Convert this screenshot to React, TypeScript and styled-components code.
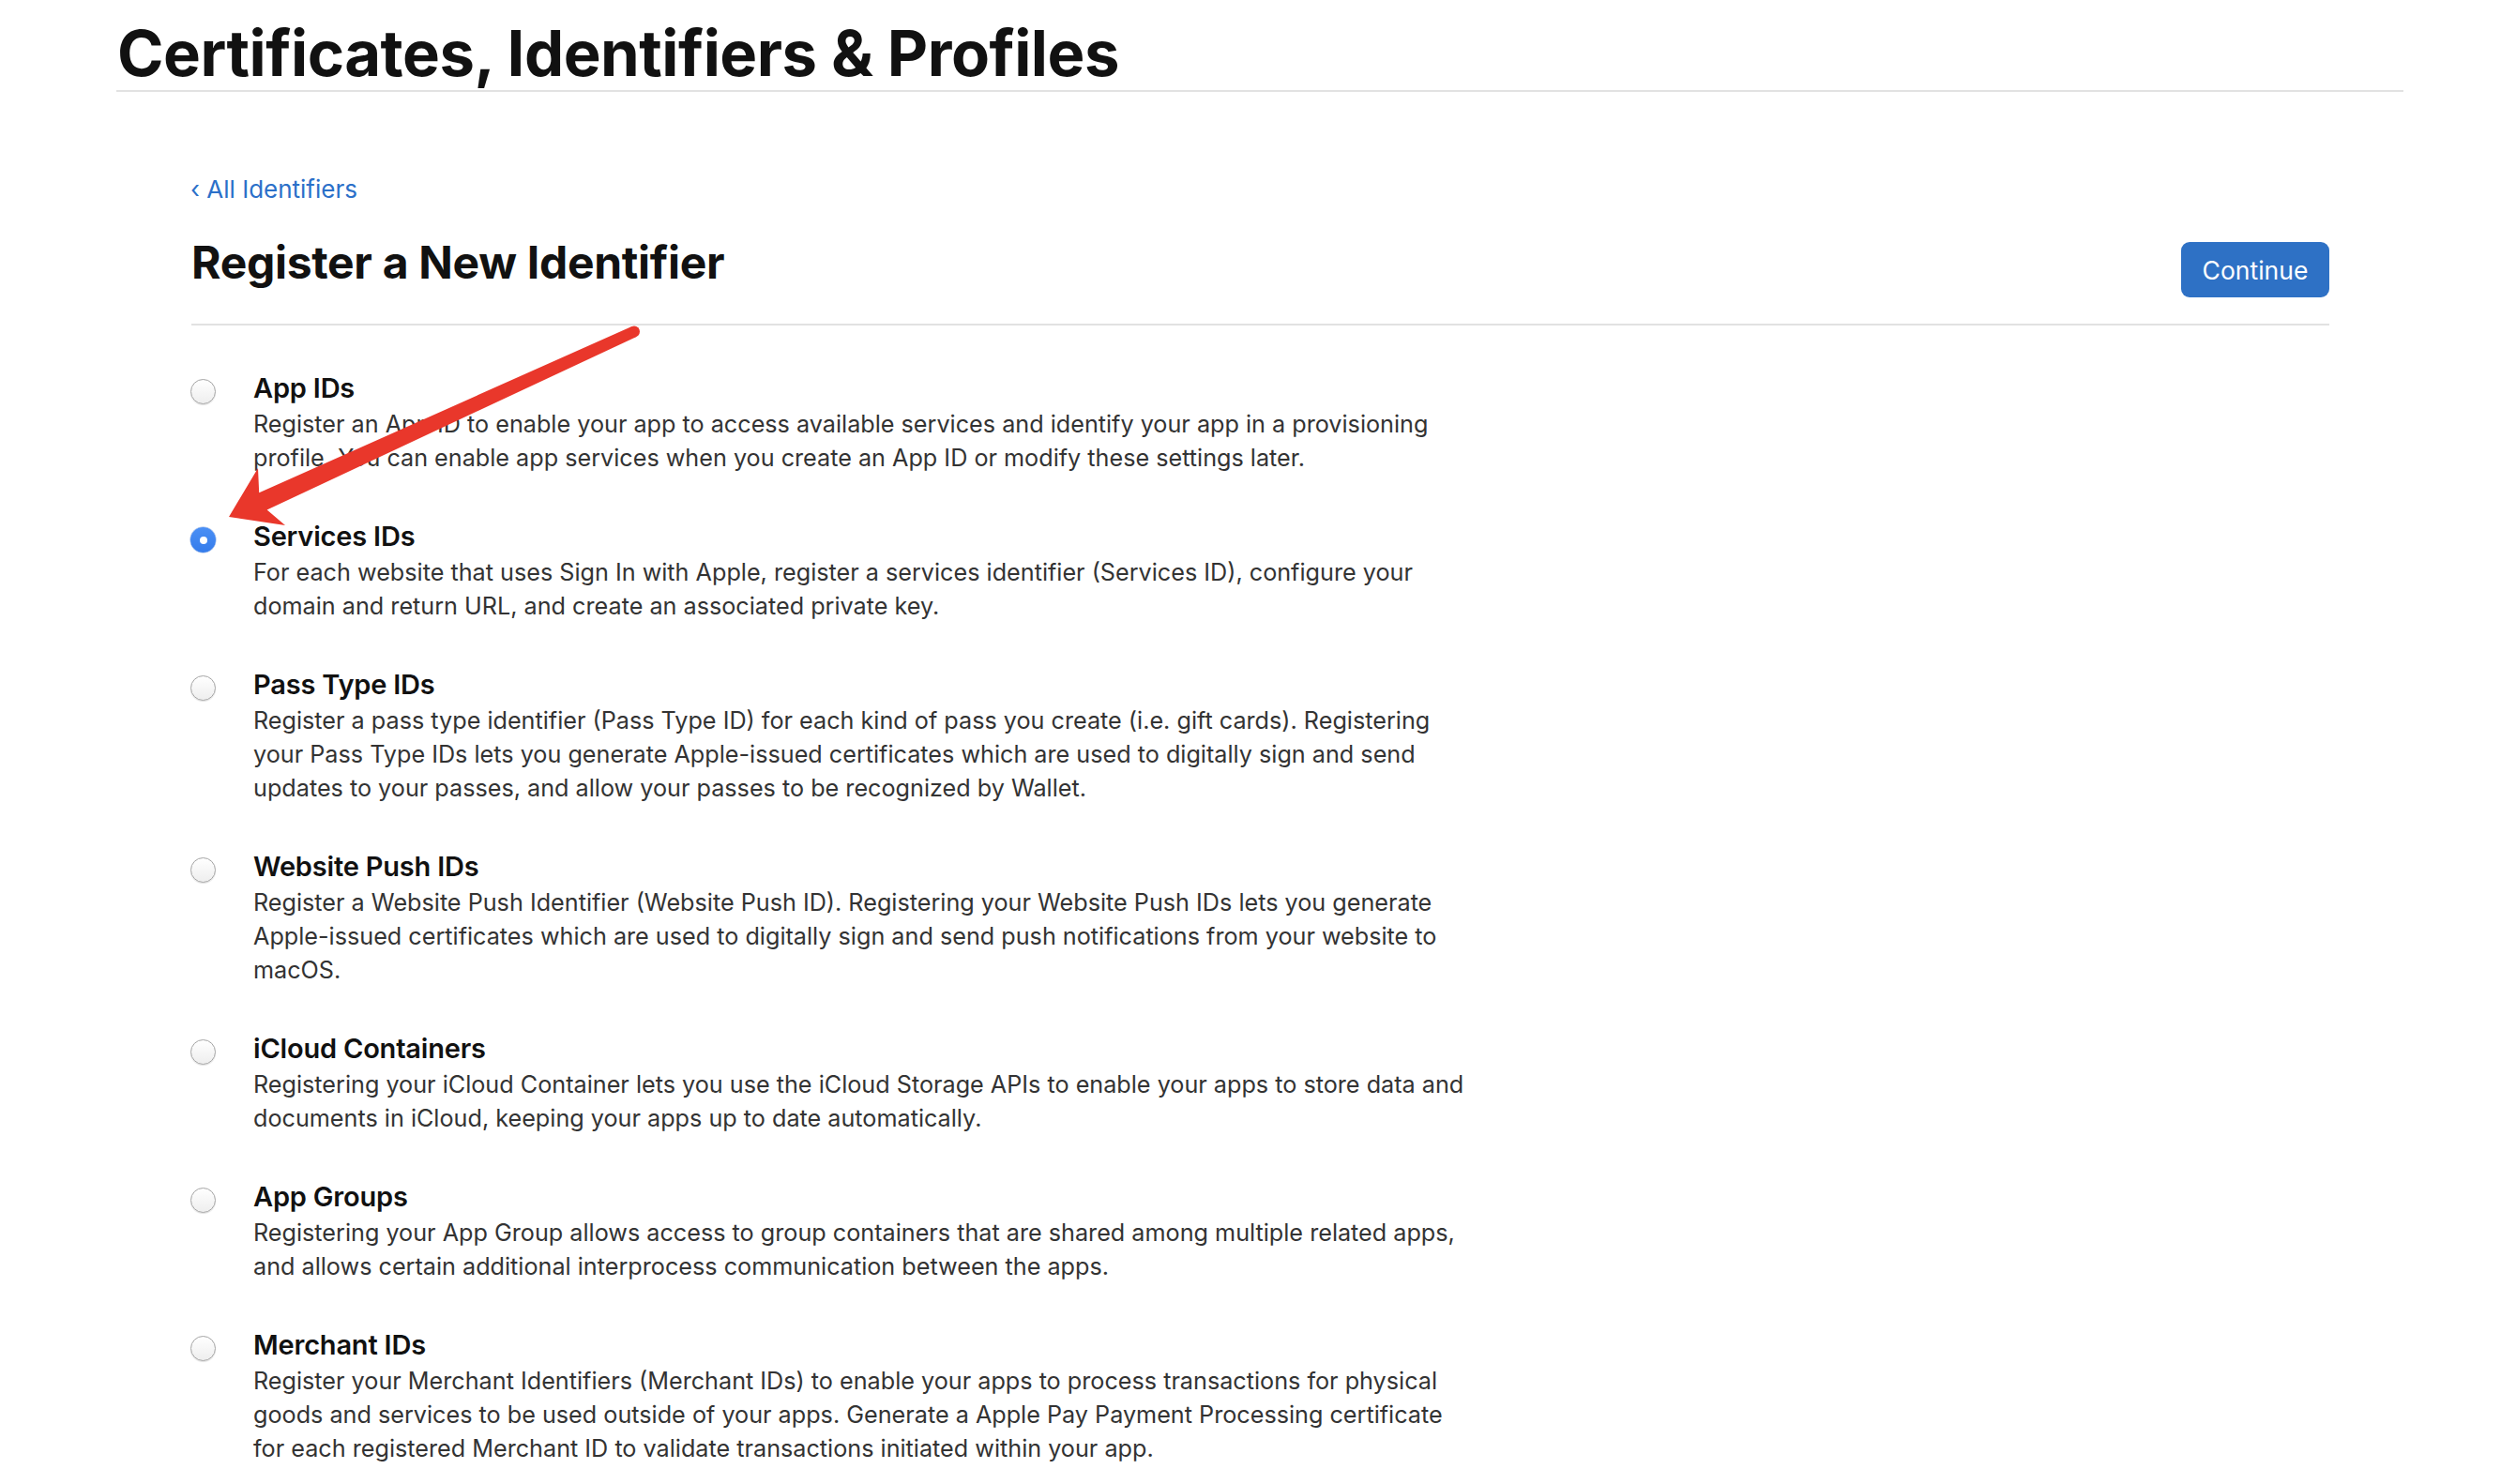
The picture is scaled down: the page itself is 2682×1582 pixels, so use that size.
import React from "react";
import styled, { createGlobalStyle } from "styled-components";

const GlobalStyle = createGlobalStyle`
  html, body {
    margin: 0;
    padding: 0;
    background: #ffffff;
  }
  body {
    font-family: "Inter", "Liberation Sans", sans-serif;
    -webkit-font-smoothing: antialiased;
    color: #111111;
  }
`;

const Page = styled.div`
  position: relative;
  width: 2682px;
  min-height: 1582px;
  box-sizing: border-box;
  padding: 0 120px 0 124px;
`;

const Header = styled.header`
  padding-top: 24px;
  padding-bottom: 6px;
  border-bottom: 2px solid #e2e2e2;
`;

const PageTitle = styled.h1`
  margin: 0;
  padding-left: 1px;
  font-size: 67px;
  line-height: 66px;
  font-weight: 700;
  letter-spacing: -0.5px;
  color: #111111;
`;

const Section = styled.main`
  padding: 86px 79px 0 80px;
`;

const BackLink = styled.a`
  display: inline-block;
  font-size: 26px;
  line-height: 36px;
  color: #2b70c9;
  text-decoration: none;
  margin-left: -1px;
`;

const TitleRow = styled.div`
  display: flex;
  justify-content: space-between;
  align-items: flex-start;
  margin-top: 32px;
  padding-bottom: 28px;
  border-bottom: 2px solid #e2e2e2;
`;

const SectionTitle = styled.h2`
  margin: 0;
  font-size: 48px;
  line-height: 56px;
  font-weight: 700;
  letter-spacing: -0.3px;
  color: #111111;
`;

const ContinueButton = styled.button`
  margin-top: 6px;
  height: 59px;
  width: 158px;
  border: none;
  border-radius: 9px;
  background: #2e71c5;
  color: #ffffff;
  font-family: "Inter", "Liberation Sans", sans-serif;
  font-size: 26.5px;
  font-weight: 400;
  padding: 0;
  cursor: pointer;
`;

const OptionList = styled.ul`
  list-style: none;
  margin: 47px 0 0 0;
  padding: 0;
  display: flex;
  flex-direction: column;
  gap: 46px;
`;

const OptionItem = styled.li`
  display: grid;
  grid-template-columns: 26px 1fr;
  column-gap: 40px;
  align-items: start;
`;

const Radio = styled.span<{ $checked?: boolean }>`
  position: relative;
  display: block;
  width: 27px;
  height: 27px;
  margin-top: 10px;
  margin-left: -1px;
  box-sizing: border-box;
  border-radius: 50%;
  border: ${(p) => (p.$checked ? "none" : "1.5px solid #a4a4a4")};
  background: ${(p) =>
    p.$checked
      ? "linear-gradient(#4a8ff5, #357ceb)"
      : "linear-gradient(#ffffff, #eeeeee)"};
  box-shadow: ${(p) =>
    p.$checked ? "0 0 0 0.5px rgba(40,100,200,0.5)" : "0 1px 1px rgba(0,0,0,0.12)"};

  &::after {
    content: "";
    display: ${(p) => (p.$checked ? "block" : "none")};
    position: absolute;
    left: 50%;
    top: 50%;
    width: 8px;
    height: 8px;
    margin: -4px 0 0 -4px;
    border-radius: 50%;
    background: #ffffff;
  }
`;

const OptionBody = styled.div`
  display: flex;
  flex-direction: column;
  min-width: 0;
`;

const OptionTitle = styled.div`
  font-size: 29px;
  line-height: 40px;
  font-weight: 600;
  letter-spacing: -0.2px;
  color: #111111;
`;

const OptionDesc = styled.p`
  margin: 0;
  font-size: 25.2px;
  line-height: 36px;
  font-weight: 400;
  color: #333333;
  white-space: nowrap;
`;

const Overlay = styled.svg`
  position: absolute;
  left: 0;
  top: 0;
  pointer-events: none;
`;

type Option = { title: string; lines: string[]; selected?: boolean };

const options: Option[] = [
  {
    title: "App IDs",
    lines: [
      "Register an App ID to enable your app to access available services and identify your app in a provisioning",
      "profile. You can enable app services when you create an App ID or modify these settings later.",
    ],
  },
  {
    title: "Services IDs",
    selected: true,
    lines: [
      "For each website that uses Sign In with Apple, register a services identifier (Services ID), configure your",
      "domain and return URL, and create an associated private key.",
    ],
  },
  {
    title: "Pass Type IDs",
    lines: [
      "Register a pass type identifier (Pass Type ID) for each kind of pass you create (i.e. gift cards). Registering",
      "your Pass Type IDs lets you generate Apple-issued certificates which are used to digitally sign and send",
      "updates to your passes, and allow your passes to be recognized by Wallet.",
    ],
  },
  {
    title: "Website Push IDs",
    lines: [
      "Register a Website Push Identifier (Website Push ID). Registering your Website Push IDs lets you generate",
      "Apple-issued certificates which are used to digitally sign and send push notifications from your website to",
      "macOS.",
    ],
  },
  {
    title: "iCloud Containers",
    lines: [
      "Registering your iCloud Container lets you use the iCloud Storage APIs to enable your apps to store data and",
      "documents in iCloud, keeping your apps up to date automatically.",
    ],
  },
  {
    title: "App Groups",
    lines: [
      "Registering your App Group allows access to group containers that are shared among multiple related apps,",
      "and allows certain additional interprocess communication between the apps.",
    ],
  },
  {
    title: "Merchant IDs",
    lines: [
      "Register your Merchant Identifiers (Merchant IDs) to enable your apps to process transactions for physical",
      "goods and services to be used outside of your apps. Generate a Apple Pay Payment Processing certificate",
      "for each registered Merchant ID to validate transactions initiated within your app.",
    ],
  },
];

function Arrow() {
  return (
    <Overlay width="2682" height="1582" viewBox="0 0 2682 1582">
      <polygon
        fill="#e9372b"
        points="673.5,347.9 276.2,525.3 275,499 244,551 304,560 284.6,543.5 678.5,358.9"
      />
      <circle cx="676" cy="353.4" r="6" fill="#e9372b" />
    </Overlay>
  );
}

export default function App() {
  return (
    <>
      <GlobalStyle />
      <Page>
        <Header>
          <PageTitle>Certificates, Identifiers &amp; Profiles</PageTitle>
        </Header>
        <Section>
          <BackLink href="#">‹ All Identifiers</BackLink>
          <TitleRow>
            <SectionTitle>Register a New Identifier</SectionTitle>
            <ContinueButton>Continue</ContinueButton>
          </TitleRow>
          <OptionList>
            {options.map((o) => (
              <OptionItem key={o.title}>
                <Radio $checked={o.selected} />
                <OptionBody>
                  <OptionTitle>{o.title}</OptionTitle>
                  <OptionDesc>
                    {o.lines.map((l, i) => (
                      <React.Fragment key={i}>
                        {i > 0 && <br />}
                        {l}
                      </React.Fragment>
                    ))}
                  </OptionDesc>
                </OptionBody>
              </OptionItem>
            ))}
          </OptionList>
        </Section>
        <Arrow />
      </Page>
    </>
  );
}
